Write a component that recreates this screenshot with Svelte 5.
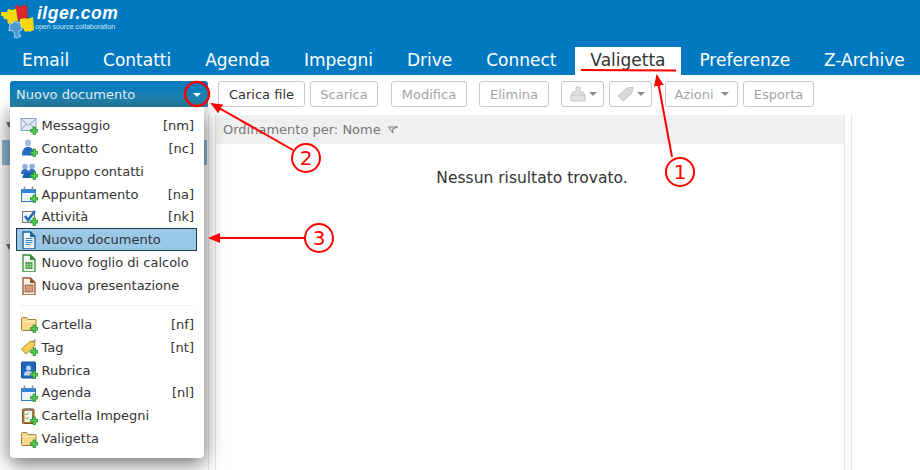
<script>
  const tabs = ["Email", "Contatti", "Agenda", "Impegni", "Drive", "Connect", "Valigetta", "Preferenze", "Z-Archive"];

  const plus = `<path d="M10.500 12.500h2.500v-2.500h2.500v2.500h2.500v2.500h-2.500v2.500h-2.500v-2.500h-2.500z" fill="#56c94f" stroke="#1f8f2a" stroke-width=".8"/>`;
  const folder = `<path d="M1.500 3.500a1 1 0 0 1 1-1h4l1.500 2h7a1 1 0 0 1 1 1v9a1 1 0 0 1-1 1h-12.500a1 1 0 0 1-1-1z" fill="#f6d98c" stroke="#a57c3a"/><path d="M2 6.500h13.500" stroke="#fff0c0"/>`;
  const calendar = `<rect x="1.500" y="4.500" width="14" height="12" fill="#eef3f8" stroke="#2f78c4"/><rect x="1" y="4" width="15" height="4" fill="#2f86d8"/><path d="M4.500 1.500v4M12.500 1.500v4" stroke="#8a8a8a" stroke-width="1.500"/>`;
  const person = `<ellipse cx="8" cy="4" rx="3" ry="3.500" fill="#9dbce0"/><path d="M2 16.500c0-7 3-8.500 6-8.500s6 1.500 6 8.500z" fill="#2468c0"/>`;
  const page = (line, fill) => `<path d="M3 1h7.500l4.500 4.500v12.500h-12z" fill="${fill}" stroke="${line}" stroke-width="1.300"/><path d="M10 .5l5.500 5.500h-5.500z" fill="${line}"/>`;

  const icons = {
    mail: `<rect x="1" y="1.500" width="15" height="12" fill="#dfe8f3" stroke="#8ea6c4"/><path d="M1 2l7.500 6.500 7.500-6.500M1 13l5.500-6M16 13l-5.500-6" fill="none" stroke="#8ea6c4"/>` + plus,
    contact: person + plus,
    group: `<circle cx="5" cy="4.500" r="2.800" fill="#8fb2dc"/><circle cx="12" cy="4.500" r="2.800" fill="#8fb2dc"/><path d="M1 12c0-4 2-5 4-5s4 1 4 5zM8 12c0-4 2-5 4-5s4 1 4 5z" fill="#2f70c8"/><path d="M2.500 16c0-4.500 3-5.500 6-5.500s6 1 6 5.500z" fill="#1e5fb4"/>` + plus,
    calendar: calendar + plus,
    task: `<rect x="2.500" y="3.500" width="12" height="11" fill="#f2f2f2" stroke="#777"/><path d="M5 8l3 4 7-9" fill="none" stroke="#1f6fc0" stroke-width="2.600"/>` + plus,
    doc: page("#1d5f96", "#eef3f8") + `<path d="M5.500 7.500h7M5.500 9.500h7M5.500 11.500h7M5.500 13.500h5" stroke="#3a86c0"/>`,
    sheet: page("#2f8f2f", "#f3f8ee") + `<rect x="5.500" y="8" width="7" height="7" fill="#3c8f3c"/><path d="M5.500 10.300h7M5.500 12.600h7M7.800 8v7M10.200 8v7" stroke="#cfe8c8" stroke-width=".6"/>`,
    slides: page("#9a5228", "#f8f0ea") + `<rect x="5" y="8" width="8" height="7" fill="#cf9a78" stroke="#9a5228" stroke-width=".7"/>`,
    folder: folder + plus,
    tag: `<path d="M1.500 11l8.500-7.500 5-.5-.5 5-8.500 8z" fill="#f3cf55" stroke="#b08a2a"/><path d="M12.500 4.500l3-3.500" stroke="#777"/>` + plus,
    book: `<rect x="1.500" y="1" width="14" height="16" rx="1" fill="#1f66c2" stroke="#164f9a"/><circle cx="8.500" cy="7" r="2.500" fill="#bcd2ee"/><path d="M4 14.500c0-4 2.500-4.500 4.500-4.500s4.500 .5 4.500 4.500z" fill="#bcd2ee"/>` + plus,
    clipboard: `<rect x="2.500" y="2" width="11.500" height="14.500" rx="1" fill="#a97a3c" stroke="#7a5524"/><rect x="4.500" y="4" width="7.500" height="11" fill="#f6f6ee"/><rect x="5.500" y="1" width="5.500" height="2.500" fill="#888"/><path d="M5.500 7l1 1 2-2M5.500 11l1 1 2-2" fill="none" stroke="#3f9a3f"/>` + plus
  };

  const upperItems = [
    { icon: "mail", label: "Messaggio", key: "[nm]" },
    { icon: "contact", label: "Contatto", key: "[nc]" },
    { icon: "group", label: "Gruppo contatti" },
    { icon: "calendar", label: "Appuntamento", key: "[na]" },
    { icon: "task", label: "Attività", key: "[nk]" },
    { icon: "doc", label: "Nuovo documento", selected: true },
    { icon: "sheet", label: "Nuovo foglio di calcolo" },
    { icon: "slides", label: "Nuova presentazione" }
  ];

  const lowerItems = [
    { icon: "folder", label: "Cartella", key: "[nf]" },
    { icon: "tag", label: "Tag", key: "[nt]" },
    { icon: "book", label: "Rubrica" },
    { icon: "calendar", label: "Agenda", key: "[nl]" },
    { icon: "clipboard", label: "Cartella Impegni" },
    { icon: "folder", label: "Valigetta" }
  ];
</script>

{#snippet menuRow(item)}
  <li class="item" class:selected={item.selected}>
    <svg class="icon" viewBox="0 0 18 18" width="18" height="18">{@html icons[item.icon]}</svg>
    <span class="label">{item.label}</span>
    {#if item.key}<span class="key">{item.key}</span>{/if}
  </li>
{/snippet}

<div class="page">
  <header class="top">
    <div class="logo">
      <svg viewBox="0 0 36 38" width="36" height="38">
        <path d="M15 5l4-1 1 2 4-2 3 0 1 13-6 1-2 3-2-3-2 1z" fill="#d8262c"/>
        <path d="M1 11l6 0 1-3 4 1 4-1 2 13-3-1-1 3-3-1-3 1-1-5-3 0-1-3-2 0z" fill="#f5d90f"/>
        <path d="M20 18l6-1 1 1 6-2 1 13-5 2-1-1-3 1-2-4-3 0z" fill="#f5d90f"/>
        <path d="M10 23l3-1 1-2 3 2 3-1 2 8-3 1 0 3 2 2-4 2-3-1 1-3-3-4-3 1z" fill="#4a97d2" stroke="#cfe6f5" stroke-width=".8"/>
      </svg>
      <div class="logo-text">
        <span class="logo-name">ilger.com</span>
        <span class="logo-sub">open source collaboration</span>
      </div>
    </div>
    <nav class="tabs">
      {#each tabs as tab}
        <span class="tab" class:active={tab === "Valigetta"}>{tab}</span>
      {/each}
    </nav>
  </header>

  <div class="toolbar">
    <div class="new-doc">
      <span>Nuovo documento</span>
      <i class="caret white"></i>
    </div>
    <button class="btn w-carica">Carica file</button>
    <button class="btn off w-scarica">Scarica</button>
    <button class="btn off w-modifica">Modifica</button>
    <button class="btn off w-elimina">Elimina</button>
    <button class="btn off w-icon first-icon">
      <svg viewBox="0 0 18 18" width="18" height="18">
        <path d="M7 2h4v5h3l2 3v6H2v-6l2-3h3z" fill="#e2e2e2" stroke="#c4c4c4"/>
        <path d="M2 10h14" stroke="#c4c4c4"/>
      </svg>
      <i class="caret"></i>
    </button>
    <button class="btn off w-icon">
      <svg viewBox="0 0 18 18" width="18" height="18">
        <path d="M1 11l9-8 6-1-1 6-9 8z" fill="#d8d8d8" stroke="#c4c4c4"/>
      </svg>
      <i class="caret"></i>
    </button>
    <button class="btn off w-azioni">Azioni <i class="caret"></i></button>
    <button class="btn off w-esporta">Esporta</button>
  </div>

  <main class="workspace">
    <aside class="tree">
      <i class="tree-arrow"></i>
      <div class="tree-selected"></div>
      <i class="tree-arrow second"></i>
    </aside>
    <section class="list">
      <div class="list-head">
        <span>Ordinamento per: Nome</span>
        <svg viewBox="0 0 10 8" width="10" height="8"><path d="M.5 1h9l-5 2 .5 4z" fill="none" stroke="#777"/></svg>
      </div>
      <p class="empty">Nessun risultato trovato.</p>
    </section>
    <aside class="preview"></aside>
  </main>

  <ul class="menu">
    {#each upperItems as item}
      {@render menuRow(item)}
    {/each}
    <li class="separator"></li>
    {#each lowerItems as item}
      {@render menuRow(item)}
    {/each}
  </ul>

  <svg class="marks" viewBox="0 0 920 470" width="920" height="470">
    <defs>
      <marker id="head" markerWidth="12" markerHeight="10" refX="10" refY="5" orient="auto" markerUnits="userSpaceOnUse">
        <path d="M0 0l12 5-12 5z" fill="#f00"/>
      </marker>
    </defs>
    <path d="M581 70l95 .5" stroke="#f00" stroke-width="2" fill="none"/>
    <circle cx="197" cy="94" r="12" stroke="#f00" stroke-width="2.500" fill="none"/>
    <path d="M672 157l-15-81" stroke="#f00" stroke-width="2" fill="none" marker-end="url(#head)"/>
    <path d="M293 150l-81-46" stroke="#f00" stroke-width="2" fill="none" marker-end="url(#head)"/>
    <path d="M305 238h-95" stroke="#f00" stroke-width="2" fill="none" marker-end="url(#head)"/>
    <g fill="#fff" stroke="#f00" stroke-width="2">
      <circle cx="680" cy="172" r="14"/>
      <circle cx="306" cy="158" r="14"/>
      <circle cx="319" cy="238" r="14"/>
    </g>
    <g class="num">
      <text x="680" y="179">1</text>
      <text x="306" y="165">2</text>
      <text x="319" y="245">3</text>
    </g>
  </svg>
</div>

<style>
  :global(body) {
    margin: 0;
    background: #fff;
    overflow: hidden;
  }

  * {
    box-sizing: border-box;
  }

  .page {
    position: relative;
    width: 920px;
    height: 470px;
    overflow: hidden;
    font-family: "DejaVu Sans", sans-serif;
    color: #333;
  }

  .top {
    height: 75px;
    background: #0079c1;
  }

  .logo {
    display: flex;
    height: 47px;
    padding-top: 1px;
    color: #fff;
  }

  .logo-text {
    display: flex;
    flex-direction: column;
    margin-top: 3px;
    margin-left: 1px;
  }

  .logo-name {
    font: italic bold 17.5px/18px "Liberation Sans", sans-serif;
    letter-spacing: .5px;
  }

  .logo-sub {
    margin-left: -2px;
    font: 7px/9px "Liberation Sans", sans-serif;
    color: #d5e9f6;
  }

  .tabs {
    display: flex;
    height: 28px;
    padding-left: 6.5px;
  }

  .tab {
    flex-shrink: 0;
    padding: 0 15.5px;
    margin-right: 2.9px;
    font-size: 17px;
    line-height: 26px;
    color: #fff;
    white-space: nowrap;
  }

  .tab.active {
    background: #fff;
    color: #333;
  }

  .toolbar {
    display: flex;
    height: 40px;
    padding: 6px 0 0 10px;
    align-items: flex-start;
  }

  .new-doc {
    display: flex;
    align-items: center;
    justify-content: space-between;
    width: 198px;
    height: 26px;
    margin-right: 10px;
    padding: 0 6px;
    border-radius: 3px 3px 0 0;
    background: linear-gradient(#0079c1, #2b89ad);
    color: #e4f0f7;
    font-size: 13px;
  }

  .caret {
    display: inline-block;
    width: 0;
    height: 0;
    border: 4px solid transparent;
    border-top: 4px solid #8c8c8c;
    border-bottom: 0;
    vertical-align: middle;
  }

  .caret.white {
    border-top-color: #fff;
    margin-right: 1px;
    margin-top: 2px;
  }

  .btn {
    display: flex;
    align-items: center;
    justify-content: center;
    gap: 4px;
    height: 26px;
    padding: 0;
    border: 1px solid #c8c8c8;
    border-radius: 3px;
    background: #fff;
    color: #333;
    font: 13px "DejaVu Sans", sans-serif;
  }

  .btn.off {
    color: #a3a3a3;
  }

  .w-carica { width: 87px; margin-right: 5px; }
  .w-scarica { width: 68px; margin-right: 13px; }
  .w-modifica { width: 76px; margin-right: 12px; }
  .w-elimina { width: 70px; margin-right: 12px; }
  .w-icon { width: 43px; margin-right: 5px; gap: 2px; }
  .first-icon + .w-icon { margin-right: 13px; }
  .w-azioni { width: 73px; margin-right: 5px; gap: 7px; }
  .w-esporta { width: 71px; }

  .workspace {
    display: flex;
    height: 355px;
  }

  .tree {
    width: 209px;
    margin-right: 6px;
    padding-top: 7px;
    flex-shrink: 0;
    border-right: 1px solid #e6e6e6;
  }

  .tree-arrow {
    display: block;
    width: 0;
    height: 0;
    margin-left: 6px;
    border: 3.5px solid transparent;
    border-top: 6px solid #777;
    border-bottom: 0;
  }

  .tree-arrow.second {
    margin-top: 79px;
  }

  .tree-selected {
    width: 205px;
    height: 25px;
    margin: 12px 0 0 2px;
    background: #8fb9d6;
  }

  .list {
    width: 630px;
    border-left: 1px solid #e6e6e6;
    border-right: 1px solid #e6e6e6;
  }

  .list-head {
    display: flex;
    align-items: center;
    gap: 7px;
    height: 29px;
    padding-left: 7px;
    background: #f0f0f0;
    color: #777;
    font-size: 13px;
  }

  .empty {
    margin: 25px 0 0;
    padding-left: 4px;
    text-align: center;
    font-size: 15.5px;
    line-height: 18px;
    color: #333;
  }

  .preview {
    flex: 1;
    margin-left: 6px;
    border-left: 1px solid #e6e6e6;
  }

  .menu {
    position: absolute;
    left: 10px;
    top: 107px;
    width: 194px;
    margin: 0;
    padding: 7.2px 0 7.8px;
    list-style: none;
    background: #fff;
    border-radius: 0 0 4px 4px;
    box-shadow: 0 5px 20px rgba(0, 0, 0, .6);
  }

  .item {
    display: flex;
    align-items: center;
    height: 22.85px;
    padding: 0 10px;
    font-size: 13px;
    color: #333;
  }

  .item.selected {
    width: 181px;
    margin-left: 6px;
    padding-left: 3px;
    background: #9ac9e7;
    border: 1px solid #1e3a50;
  }

  .icon {
    flex-shrink: 0;
    margin-right: 3.5px;
  }

  .label {
    flex: 1;
  }

  .separator {
    height: 1px;
    margin: 8px 10px 7px;
    background: #ececec;
  }

  .marks {
    position: absolute;
    left: 0;
    top: 0;
    pointer-events: none;
  }

  .num text {
    fill: #f00;
    font-size: 20px;
    text-anchor: middle;
  }
</style>
